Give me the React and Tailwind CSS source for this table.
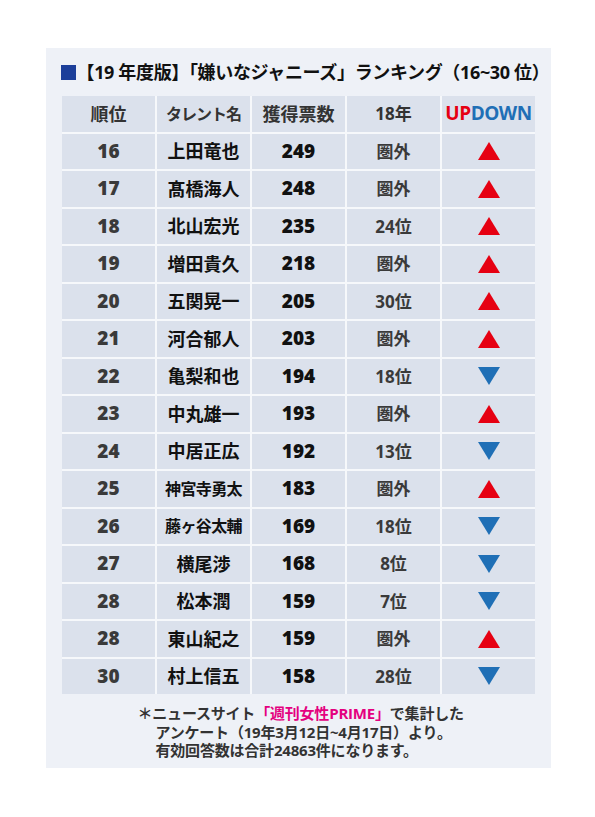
const ROWS = [
  ["16", "上田竜也", "249", "圏外", "up"],
  ["17", "髙橋海人", "248", "圏外", "up"],
  ["18", "北山宏光", "235", "24位", "up"],
  ["19", "増田貴久", "218", "圏外", "up"],
  ["20", "五関晃一", "205", "30位", "up"],
  ["21", "河合郁人", "203", "圏外", "up"],
  ["22", "亀梨和也", "194", "18位", "down"],
  ["23", "中丸雄一", "193", "圏外", "up"],
  ["24", "中居正広", "192", "13位", "down"],
  ["25", "神宮寺勇太", "183", "圏外", "up"],
  ["26", "藤ヶ谷太輔", "169", "18位", "down"],
  ["27", "横尾渉", "168", "8位", "down"],
  ["28", "松本潤", "159", "7位", "down"],
  ["28", "東山紀之", "159", "圏外", "up"],
  ["30", "村上信五", "158", "28位", "down"],
];

const font = { fontFamily: '"Open Sans", "Noto Sans CJK JP", sans-serif' };

function Arrow({ dir }) {
  // 上向きは赤、下向きは青
  return dir === "up" ? (
    <svg width="22" height="18" viewBox="0 0 22 18">
      <polygon points="11,0 22,18 0,18" fill="#e60012" />
    </svg>
  ) : (
    <svg width="22" height="18" viewBox="0 0 22 18">
      <polygon points="0,0 22,0 11,18" fill="#1f6fb6" />
    </svg>
  );
}

function Cell({ children, className = "" }) {
  return (
    <div className={`flex items-center justify-center bg-[#dbe1ec] h-[35.5px] font-bold leading-none ${className}`}>
      {children}
    </div>
  );
}

export default function App() {
  return (
    <div className="w-[595px] h-[817px] bg-white pt-[48px] pl-[46px]" style={font}>
      <div className="w-[505px] h-[720px] bg-[#eef1f7] flex flex-col items-center">
        {/* タイトル */}
        <div className="mt-[15px] w-[476px] h-[18px] flex items-center whitespace-nowrap text-[18px] font-bold text-[#111] tracking-[-0.35px] leading-none">
          <span className="inline-block shrink-0 w-[15px] h-[15px] bg-[#1c3f9a] mr-[1px]" />
          <span>【19 年度版】「嫌いなジャニーズ」ランキング（16~30 位）</span>
        </div>

        {/* 表 */}
        <div className="mt-[15px] w-[473px] grid grid-cols-5 gap-[2px] bg-[#f6f8fb]">
          <Cell className="text-[18px] text-[#333]">順位</Cell>
          <Cell className="text-[16px] text-[#333] tracking-[-1px]">タレント名</Cell>
          <Cell className="text-[18px] text-[#333]">獲得票数</Cell>
          <Cell className="text-[17px] text-[#333]">18年</Cell>
          <Cell className="text-[19px] tracking-[-0.5px]">
            <span className="text-[#e60012]">UP</span>
            <span className="text-[#1f6fb6]">DOWN</span>
          </Cell>
          {ROWS.map((r, i) => (
            <div key={i} className="contents">
              <Cell className="text-[19px] text-[#3a3a3a] font-extrabold">{r[0]}</Cell>
              <Cell className={`${r[1].length > 4 ? "text-[16px] tracking-[-0.6px]" : "text-[18px]"} text-[#111]`}>
                {r[1]}
              </Cell>
              <Cell className="text-[19px] text-[#111] font-extrabold">{r[2]}</Cell>
              <Cell className="text-[17px] text-[#3a3a3a]">{r[3]}</Cell>
              <Cell>
                <Arrow dir={r[4]} />
              </Cell>
            </div>
          ))}
        </div>

        {/* 注釈 */}
        <div className="mt-[10px] w-[330px] ml-[8px] text-[15px] font-bold text-[#333] leading-[18.5px] tracking-[-0.2px] whitespace-nowrap">
          <div>
            ＊ニュースサイト<span className="text-[#e4007f]">「週刊女性PRIME」</span>で集計した
          </div>
          <div className="pl-[18px]">アンケート（19年3月12日~4月17日）より。</div>
          <div className="pl-[18px]">有効回答数は合計24863件になります。</div>
        </div>
      </div>
    </div>
  );
}
